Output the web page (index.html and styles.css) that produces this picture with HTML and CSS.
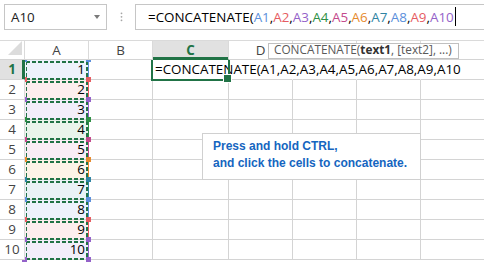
FILE: index.html
```html
<!DOCTYPE html>
<html lang="en">
<head>
    <meta charset="UTF-8">
    <title>CONCATENATE</title>
    <link rel="stylesheet" href="styles.css">
</head>
<body>
    <div class="topbar">
        <div class="name-box">A10<span class="name-arrow"></span></div>
        <div class="bar-dots">
            <svg width="3" height="26" viewBox="0 0 3 26"><circle cx="1.5" cy="9.3" r="0.9" fill="#a6a6a6"/><circle cx="1.5" cy="12.8" r="0.9" fill="#a6a6a6"/><circle cx="1.5" cy="16.3" r="0.9" fill="#a6a6a6"/></svg>
        </div>
        <div class="formula">
            <span>=CONCATENATE(<span class="t-blue">A1</span>,<span class="t-red">A2</span>,<span class="t-purple">A3</span>,<span class="t-green">A4</span>,<span class="t-magenta">A5</span>,<span class="t-orange">A6</span>,<span class="t-teal">A7</span>,<span class="t-blue">A8</span>,<span class="t-red">A9</span>,<span class="t-purple">A10</span></span>
            <span class="caret"></span>
        </div>
    </div>

    <div class="sheet">
        <div class="corner"><svg width="24" height="18" viewBox="0 0 24 18"><polygon points="8,14 22,14 22,0" fill="#dcdcdc"/></svg></div>
        <div class="ch">A</div>
        <div class="ch">B</div>
        <div class="ch sel">C</div>
        <div class="ch">D</div>
        <!-- E, F, G headers are hidden under the tooltip -->
        <div class="ch"></div>
        <div class="ch"></div>
        <div class="ch"></div>

        <div class="rh sel">1</div>
        <div class="cell a blue">1</div>
        <div class="cell"></div>
        <div class="cell active"><span>=CONCATENATE(A1,A2,A3,A4,A5,A6,A7,A8,A9,A10</span></div>
        <div class="cell flow"></div><div class="cell flow"></div><div class="cell flow"></div><div class="cell flow"></div>

        <div class="rh">2</div>
        <div class="cell a red">2</div>
        <div class="cell"></div><div class="cell"></div><div class="cell"></div><div class="cell"></div><div class="cell"></div><div class="cell"></div>

        <div class="rh">3</div>
        <div class="cell a purple">3</div>
        <div class="cell"></div><div class="cell"></div><div class="cell"></div><div class="cell"></div><div class="cell"></div><div class="cell"></div>

        <div class="rh">4</div>
        <div class="cell a green">4</div>
        <div class="cell"></div><div class="cell"></div><div class="cell"></div><div class="cell"></div><div class="cell"></div><div class="cell"></div>

        <div class="rh">5</div>
        <div class="cell a magenta">5</div>
        <div class="cell"></div><div class="cell"></div><div class="cell"></div><div class="cell"></div><div class="cell"></div><div class="cell"></div>

        <div class="rh">6</div>
        <div class="cell a orange">6</div>
        <div class="cell"></div><div class="cell"></div><div class="cell"></div><div class="cell"></div><div class="cell"></div><div class="cell"></div>

        <div class="rh">7</div>
        <div class="cell a teal">7</div>
        <div class="cell"></div><div class="cell"></div><div class="cell"></div><div class="cell"></div><div class="cell"></div><div class="cell"></div>

        <div class="rh">8</div>
        <div class="cell a blue">8</div>
        <div class="cell"></div><div class="cell"></div><div class="cell"></div><div class="cell"></div><div class="cell"></div><div class="cell"></div>

        <div class="rh">9</div>
        <div class="cell a red">9</div>
        <div class="cell"></div><div class="cell"></div><div class="cell"></div><div class="cell"></div><div class="cell"></div><div class="cell"></div>

        <div class="rh">10</div>
        <div class="cell a purple">10</div>
        <div class="cell"></div><div class="cell"></div><div class="cell"></div><div class="cell"></div><div class="cell"></div><div class="cell"></div>
    </div>

    <!-- function tooltip + hint callout sit over the grid -->
    <div class="tip">CONCATENATE(<b>text1</b>, [text2], ...)</div>
    <div class="hint">Press and hold CTRL,<br>and click the cells to concatenate.</div>
</body>
</html>
```
FILE: styles.css
```css
* {
    margin: 0;
    padding: 0;
    box-sizing: border-box;
}

body {
    position: relative;
    width: 484px;
    height: 262px;
    overflow: hidden;
    background: #fff;
    color: #000;
    font-family: "Open Sans", "Noto Sans", sans-serif;
    font-size: 13.4px;
}

/* name box + formula bar */
.topbar {
    display: flex;
    height: 40px;
    padding: 4px 0 0 4px;
}

.name-box {
    display: flex;
    align-items: center;
    width: 103px;
    height: 26px;
    padding: 0 0 1px 6px;
    border: 1px solid #c6c6c6;
    color: #222;
}

.name-arrow {
    margin-left: auto;
    margin-right: 6px;
    border-left: 3.5px solid transparent;
    border-right: 3.5px solid transparent;
    border-top: 4px solid #7a7a7a;
}

.bar-dots {
    display: flex;
    justify-content: center;
    width: 28px;
}

.formula {
    flex: 1;
    display: flex;
    align-items: center;
    height: 26px;
    padding: 0 0 1px 12px;
    border: 1px solid #c6c6c6;
    border-right: 0;
    white-space: nowrap;
}

.caret {
    width: 1px;
    height: 19px;
    margin-left: 1px;
    background: #000;
}

.t-blue { color: #5b8fdb; }
.t-red { color: #e65c62; }
.t-purple { color: #9462c9; }
.t-green { color: #2e8f45; }
.t-magenta { color: #c44a8c; }
.t-orange { color: #e68a2e; }
.t-teal { color: #2f84a3; }

/* grid */
.sheet {
    display: grid;
    grid-template-columns: 25px 64px 64px 76px 64px 64px 64px 64px;
    grid-template-rows: 19px;
    grid-auto-rows: 20px;
    border-top: 1px solid #dadada;
}

.corner,
.ch,
.rh {
    position: relative;
    z-index: 1;
    background: #fff;
    color: #444;
    text-align: center;
    border-right: 1px solid #dadada;
    border-bottom: 1px solid #d4d4d4;
}

.ch {
    line-height: 18px;
}

.rh {
    line-height: 19px;
}

.ch.sel {
    background: #e1e1e1;
    color: #217346;
    font-weight: 700;
    border-bottom-color: #217346;
    box-shadow: inset 0 -2px 0 #217346;
}

.rh.sel {
    background: #e1e1e1;
    color: #217346;
    font-weight: 700;
    border-right-color: #217346;
    box-shadow: inset -2px 0 0 #217346;
}

.corner svg {
    display: block;
}

.cell {
    border-right: 1px solid #d4d4d4;
    border-bottom: 1px solid #d4d4d4;
    line-height: 19px;
    white-space: nowrap;
}

.cell.flow {
    border-right-color: transparent;
}

/* referenced cells in column A */
.a {
    position: relative;
    padding-right: 3px;
    text-align: right;
    background: var(--tint);
    border-right-color: var(--rc);
}

.a::before {
    content: "";
    position: absolute;
    inset: 1px 0 -1px 1px;
    background:
        repeating-linear-gradient(90deg, #217346 0 4px, transparent 4px 6px) 0 0 / 100% 2px no-repeat,
        repeating-linear-gradient(90deg, #217346 0 4px, transparent 4px 6px) 0 100% / 100% 2px no-repeat,
        repeating-linear-gradient(180deg, #217346 0 4px, transparent 4px 6px) 0 0 / 1px 100% no-repeat,
        repeating-linear-gradient(180deg, #217346 0 4px, transparent 4px 6px) 100% 0 / 2px 100% no-repeat;
}

.a::after {
    content: "";
    position: absolute;
    inset: -3px;
    background:
        linear-gradient(var(--rc), var(--rc)) 0 0 / 5px 5px no-repeat,
        linear-gradient(var(--rc), var(--rc)) 100% 0 / 5px 5px no-repeat,
        linear-gradient(var(--rc), var(--rc)) 0 100% / 5px 5px no-repeat,
        linear-gradient(var(--rc), var(--rc)) 100% 100% / 5px 5px no-repeat;
}

.blue { --rc: #5b8fdb; --tint: #edf2fc; }
.red { --rc: #e65c62; --tint: #fdeeee; }
.purple { --rc: #9462c9; --tint: #f2eefa; }
.green { --rc: #2e8f45; --tint: #e9f4eb; }
.magenta { --rc: #c44a8c; --tint: #f9edf5; }
.orange { --rc: #e68a2e; --tint: #fdf3e7; }
.teal { --rc: #2f84a3; --tint: #e9f2f5; }

/* cell being edited */
.active {
    position: relative;
    padding-left: 2px;
}

.active::after {
    content: "";
    position: absolute;
    inset: -2px;
    border: 2px solid #217346;
}

.active::before {
    content: "";
    position: absolute;
    z-index: 1;
    right: -4px;
    bottom: -4px;
    width: 7px;
    height: 7px;
    background: #217346;
    border: 1px solid #fff;
}

.tip {
    position: absolute;
    z-index: 5;
    left: 268px;
    top: 43px;
    height: 16px;
    padding: 0 6px 0 5px;
    border: 1px solid #c0c0c0;
    background: #fff;
    color: #595959;
    font-size: 11.8px;
    line-height: 11px;
    white-space: nowrap;
}

.tip b {
    color: #333;
}

.hint {
    position: absolute;
    z-index: 5;
    left: 202px;
    top: 133px;
    width: 219px;
    height: 47px;
    padding: 4px 0 0 10px;
    border: 1px solid #d0d0d0;
    background: #fff;
    color: #1565c0;
    font: bold 12px/17px "Liberation Sans", Arial, sans-serif;
}
```
